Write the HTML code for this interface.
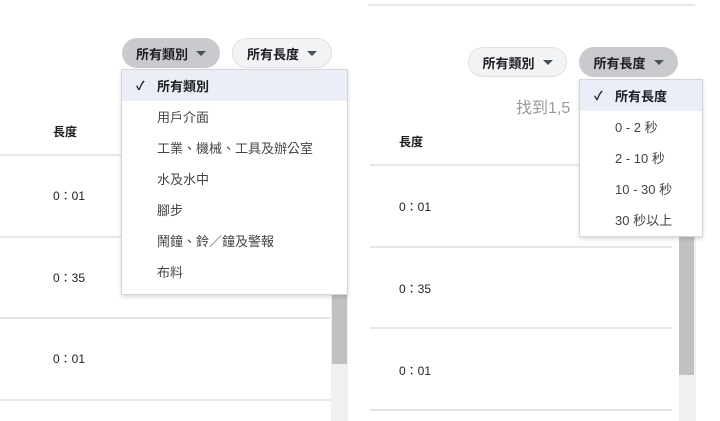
<!DOCTYPE html>
<html><head><meta charset="utf-8"><style>
*{margin:0;padding:0;box-sizing:border-box}
body{width:720px;height:421px;background:#fff;position:relative;overflow:hidden;font-family:"Liberation Sans","Noto Sans CJK TC",sans-serif;color:#1c1e21}
.a{position:absolute}
.line{position:absolute;height:2px;background:#e6e6e6}
.pill{position:absolute;height:30px;border-radius:15px;font-size:13px;font-weight:bold;display:flex;align-items:center;justify-content:center;gap:8px}
.pill.on{background:#c8cacd}
.pill.off{background:#f2f3f5;border:1px solid #dfe0e2}
.tri{width:0;height:0;border-left:5px solid transparent;border-right:5px solid transparent;border-top:5px solid #4b4f56}
.menu{position:absolute;background:#fff;border:1px solid #d6d6d6;box-shadow:0 2px 4px rgba(0,0,0,.15)}
.it{height:31px;display:flex;align-items:center;padding-left:35px;font-size:13px;color:#444;position:relative}
.it.sel{background:#ebeef6;font-weight:bold;color:#1c1e21}
.it.sel:before{content:"✓";position:absolute;left:14px;font-size:12px}
.h{font-size:12px;font-weight:bold}
.v{font-size:12px}
</style></head><body>
<!-- left panel -->
<div class="line" style="left:0;top:154px;width:331px"></div>
<div class="line" style="left:0;top:236px;width:331px"></div>
<div class="line" style="left:0;top:317px;width:331px"></div>
<div class="line" style="left:0;top:399px;width:331px"></div>
<div class="a" style="left:331px;top:293px;width:17px;height:128px;background:#f0f0f0"></div>
<div class="a" style="left:332px;top:293px;width:15px;height:71px;background:#c1c1c1"></div>
<div class="a h" style="left:53px;top:123px">長度</div>
<div class="a v" style="left:53px;top:187px">0：01</div>
<div class="a v" style="left:53px;top:269px">0：35</div>
<div class="a v" style="left:53px;top:350px">0：01</div>
<div class="pill on" style="left:122px;top:38px;width:98px">所有類別<span class="tri"></span></div>
<div class="pill off" style="left:232px;top:38px;width:100px">所有長度<span class="tri"></span></div>
<div class="menu" style="left:121px;top:69px;width:227px;height:226px">
<div class="it sel">所有類別</div><div class="it">用戶介面</div><div class="it">工業、機械、工具及辦公室</div><div class="it">水及水中</div><div class="it">腳步</div><div class="it">鬧鐘、鈴／鐘及警報</div><div class="it">布料</div>
</div>
<!-- right panel -->
<div class="line" style="left:368px;top:4px;width:327px"></div>
<div class="line" style="left:370px;top:164px;width:302px"></div>
<div class="line" style="left:370px;top:246px;width:302px"></div>
<div class="line" style="left:370px;top:327px;width:302px"></div>
<div class="line" style="left:370px;top:409px;width:302px"></div>
<div class="a" style="left:679px;top:230px;width:17px;height:191px;background:#f0f0f0"></div>
<div class="a" style="left:679px;top:230px;width:15px;height:145px;background:#c1c1c1"></div>
<div class="a" style="left:516px;top:94px;font-size:16px;color:#999">找到1,5</div>
<div class="a h" style="left:399px;top:133px">長度</div>
<div class="a v" style="left:399px;top:198px">0：01</div>
<div class="a v" style="left:399px;top:280px">0：35</div>
<div class="a v" style="left:399px;top:362px">0：01</div>
<div class="pill off" style="left:468px;top:47px;width:99px">所有類別<span class="tri"></span></div>
<div class="pill on" style="left:579px;top:47px;width:99px">所有長度<span class="tri"></span></div>
<div class="menu" style="left:579px;top:79px;width:124px;height:158px">
<div class="it sel">所有長度</div><div class="it">0 - 2 秒</div><div class="it">2 - 10 秒</div><div class="it">10 - 30 秒</div><div class="it">30 秒以上</div>
</div>
</body></html>
